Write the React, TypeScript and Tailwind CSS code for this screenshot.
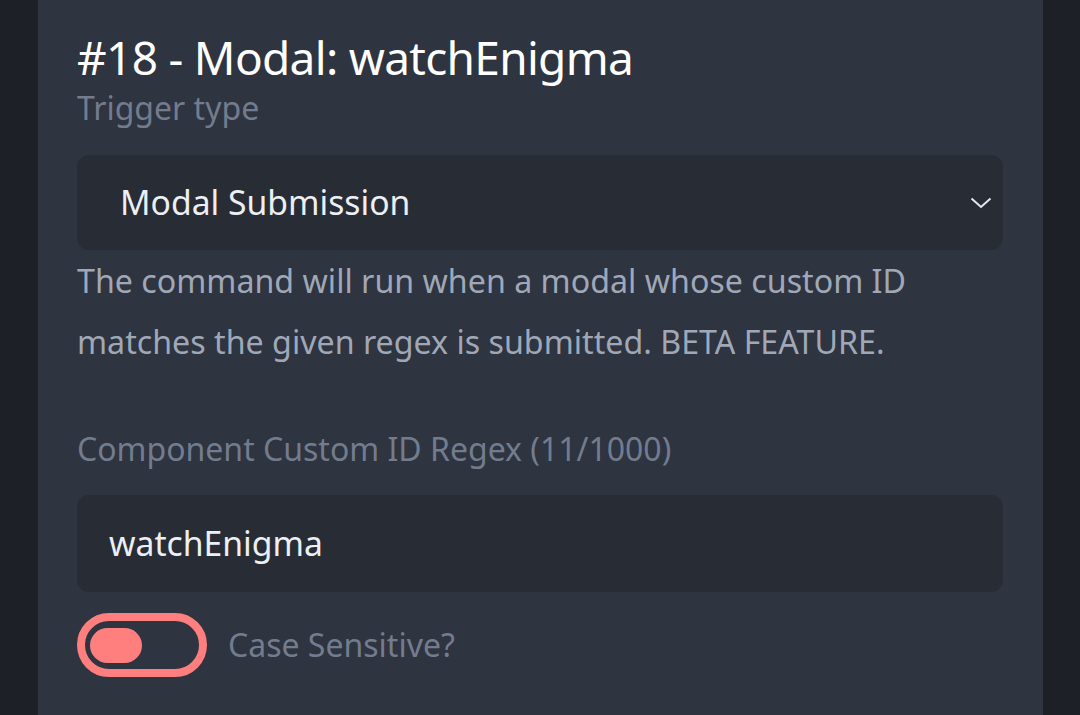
import React from 'react';

const App: React.FC = () => {
  return (
    <div className="w-[1080px] h-[715px] bg-[#1e2027] flex overflow-hidden" style={{ fontFamily: '"Noto Sans", "Open Sans", sans-serif' }}>
      <div className="ml-[38px] w-[1005px] h-full bg-[#2e3440] px-[39px] pt-[27px]">
        <h1 className="text-[46px] leading-[60px] font-normal text-white tracking-[-0.7px]">#18 - Modal: watchEnigma</h1>
        <div className="mt-[1px] text-[32px] leading-[40px] text-[#737c8e]">Trigger type</div>

        <div className="mt-[27px] h-[95px] w-[926px] rounded-[12px] bg-[#282c35] flex items-center pl-[43px] pr-[10px]">
          <span className="flex-1 text-[33.7px] text-[#eceff4]">Modal Submission</span>
          <svg width="22" height="14" viewBox="0 0 22 14" fill="none" className="mr-[1px]">
            <path d="M1.5 2.5 L11 11 L20.5 2.5" stroke="#e5e7eb" strokeWidth="2" />
          </svg>
        </div>

        <p className="text-[32.2px] leading-[61px] text-[#a0a8b7] w-[926px]">
          The command will run when a modal whose custom ID matches the given regex is submitted. BETA FEATURE.
        </p>

        <div className="mt-[57px] text-[32px] leading-[40px] text-[#737c8e]">Component Custom ID Regex (11/1000)</div>

        <div className="mt-[26px] h-[97px] w-[926px] rounded-[12px] bg-[#282c35] flex items-center pl-[32px]">
          <span className="text-[33.7px] text-[#eceff4]">watchEnigma</span>
        </div>

        <div className="mt-[21px] flex items-center gap-[21px]">
          <div className="w-[130px] h-[64px] rounded-full border-[8px] border-[#ff7f7f] flex items-center pl-[5px]">
            <div className="w-[52px] h-[35px] rounded-full bg-[#ff7f7f]" />
          </div>
          <span className="text-[32px] text-[#737c8e]">Case Sensitive?</span>
        </div>
      </div>
    </div>
  );
};

export default App;
